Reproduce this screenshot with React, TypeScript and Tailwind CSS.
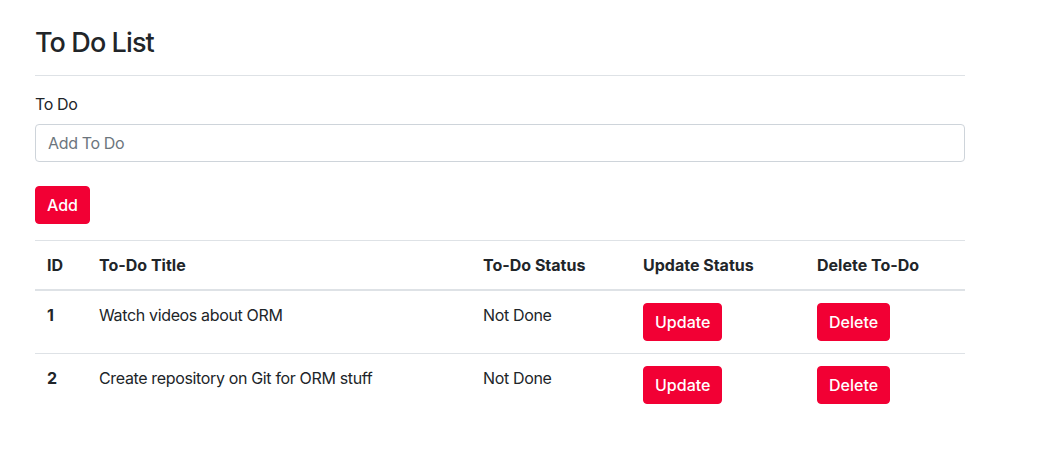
import { useState } from "react";

type Todo = { id: number; title: string; done: boolean };

const initialTodos: Todo[] = [
  { id: 1, title: "Watch videos about ORM", done: false },
  { id: 2, title: "Create repository on Git for ORM stuff", done: false },
];

const btn =
  "rounded-[4px] border border-[#f20034] bg-[#f20034] px-[11px] py-[6px] text-base leading-6 font-medium text-white";

const App = () => {
  const [todos] = useState<Todo[]>(initialTodos);

  return (
    <div
      className="min-h-screen bg-white text-[#212529]"
      style={{ fontFamily: "Inter, 'Noto Sans', sans-serif" }}
    >
      <div className="box-content flex w-[930px] flex-col pl-[35px] pt-[26px]">
        <h3 className="text-[27px] leading-[33px] font-medium tracking-[-0.9px]">
          To Do List
        </h3>
        <hr className="mt-4 mb-4 border-t border-[#dee2e6]" />
        <label className="mb-2 text-base leading-6 tracking-[-0.35px]">To Do</label>
        <input
          type="text"
          placeholder="Add To Do"
          className="h-[38px] w-full rounded-[4px] border border-[#ced4da] px-3 text-base tracking-[-0.35px] text-[#212529] placeholder:text-[#6c757d] outline-none"
        />
        <div className="mt-6">
          <button className={btn}>Add</button>
        </div>
        <table className="mt-4 w-full border-collapse text-left text-base leading-6">
          <thead>
            <tr className="border-t border-[#dee2e6]">
              <th className="w-[52px] p-3 font-bold">ID</th>
              <th className="w-[384px] p-3 font-bold">To-Do Title</th>
              <th className="w-[160px] p-3 font-bold">To-Do Status</th>
              <th className="w-[174px] p-3 font-bold">Update Status</th>
              <th className="p-3 font-bold">Delete To-Do</th>
            </tr>
          </thead>
          <tbody className="border-t-2 border-[#dee2e6]">
            {todos.map((t, i) => (
              <tr
                key={t.id}
                className={
                  i < todos.length - 1
                    ? "border-b border-[#dee2e6] align-top"
                    : "align-top"
                }
              >
                <td className="p-3 font-bold">{t.id}</td>
                <td className="p-3 tracking-[-0.35px]">{t.title}</td>
                <td className="p-3 tracking-[-0.35px]">
                  {t.done ? "Done" : "Not Done"}
                </td>
                <td className="p-3">
                  <button className={btn}>Update</button>
                </td>
                <td className="p-3">
                  <button className={btn}>Delete</button>
                </td>
              </tr>
            ))}
          </tbody>
        </table>
      </div>
    </div>
  );
};

export default App;
